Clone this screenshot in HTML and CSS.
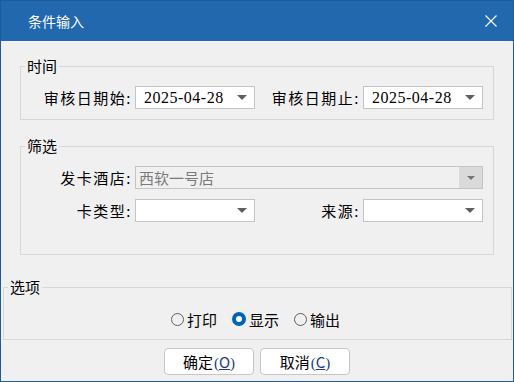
FILE: index.html
```html
<!DOCTYPE html>
<html lang="zh-CN">
<head>
    <meta charset="UTF-8">
    <title>条件输入</title>
    <link rel="stylesheet" href="styles.css">
</head>
<body>

<div class="window">
    <div class="titlebar">
        <span class="title">条件输入</span>
        <svg class="close" width="12" height="12" viewBox="0 0 12 12">
            <path d="M0.5 0.5 L11.5 11.5 M11.5 0.5 L0.5 11.5" stroke="#fff" stroke-width="1.2" fill="none"/>
        </svg>
    </div>

    <fieldset class="group group-time">
        <legend>时间</legend>
        <div class="grid">
            <label class="lbl">审核日期始:</label>
            <div class="select"><span class="val date">2025-04-28</span><span class="arrow"></span></div>
            <label class="lbl">审核日期止:</label>
            <div class="select"><span class="val date">2025-04-28</span><span class="arrow"></span></div>
        </div>
    </fieldset>

    <fieldset class="group group-filter">
        <legend>筛选</legend>
        <div class="grid">
            <label class="lbl">发卡酒店:</label>
            <div class="select disabled wide"><span class="val">西软一号店</span><span class="btn"><span class="arrow"></span></span></div>
            <label class="lbl">卡类型:</label>
            <div class="select"><span class="val"></span><span class="arrow"></span></div>
            <label class="lbl">来源:</label>
            <div class="select"><span class="val"></span><span class="arrow"></span></div>
        </div>
    </fieldset>

    <fieldset class="group group-options">
        <legend>选项</legend>
        <div class="radios">
            <span class="radio-item"><span class="radio"></span>打印</span>
            <span class="radio-item"><span class="radio checked"></span>显示</span>
            <span class="radio-item"><span class="radio"></span>输出</span>
        </div>
    </fieldset>

    <div class="buttons">
        <button type="button">确定<span class="key">(<u>O</u>)</span></button>
        <button type="button">取消<span class="key">(<u>C</u>)</span></button>
    </div>
</div>

</body>
</html>
```

FILE: styles.css
```css
* {
    box-sizing: border-box;
    font-family: "Noto Sans CJK SC", "Liberation Sans", sans-serif;
}

body {
    margin: 0;
    background-color: #f0f0f0;
}

.window {
    width: 514px;
    height: 382px;
    border: 1px solid #1b5c9d;
    background-color: #f0f0f0;
    color: #000;
    font-size: 15px;
}

.titlebar {
    height: 40px;
    background-color: #2168ae;
    color: #fff;
    display: flex;
    align-items: center;
    justify-content: space-between;
    padding: 0 16px 0 27px;
}

.title {
    font-size: 14px;
}

.group {
    border: 1px solid #d7d7d7;
    padding: 11px 0 10px 0;
}

legend {
    font-size: 15px;
    line-height: 18px;
    padding: 0 2px;
    margin-left: 4px;
}

.group-time {
    margin: 16px 19px 0 19px;
}

.group-filter {
    margin: 17px 19px 0 19px;
    padding-bottom: 32px;
}

.group-options {
    margin: 23px 1px 0 2px;
    padding: 13px 0 10px 0;
}

.grid {
    display: grid;
    grid-template-columns: 114px 120px 108px 120px;
    row-gap: 10px;
    align-items: center;
}

.lbl {
    text-align: right;
    padding-right: 3px;
    line-height: 23px;
    letter-spacing: 1.5px;
    white-space: nowrap;
}

.select {
    height: 23px;
    background-color: #fff;
    border: 1px solid #c4c4c4;
    display: flex;
    align-items: center;
    justify-content: space-between;
}

.select .val {
    padding-left: 8px;
    line-height: 21px;
}

.date {
    font-family: "Liberation Serif", serif;
    font-size: 16px;
    letter-spacing: 0.5px;
}

.arrow {
    width: 0;
    height: 0;
    border-left: 5px solid transparent;
    border-right: 5px solid transparent;
    border-top: 5px solid #5b615b;
    margin-right: 7px;
}

.select.wide {
    grid-column: 2 / 5;
}

.select.disabled {
    background-color: #f0f0f0;
    color: #7a7a7a;
}

.select.disabled .val {
    padding-left: 3px;
}

.select.disabled .btn {
    width: 23px;
    height: 21px;
    background-color: #dadada;
    display: flex;
    align-items: center;
    justify-content: center;
}

.select.disabled .btn .arrow {
    margin-right: 0;
    border-left-width: 4px;
    border-right-width: 4px;
    border-top: 4px solid #6f7a6f;
}

.radios {
    height: 20px;
    display: flex;
    align-items: center;
    justify-content: center;
    gap: 15px;
    padding-right: 4px;
}

.radio-item {
    display: flex;
    align-items: center;
    gap: 3px;
}

.radio {
    width: 13px;
    height: 13px;
    border: 1px solid #5f5f5f;
    border-radius: 50%;
}

.radio.checked {
    width: 14px;
    height: 14px;
    border: 4px solid #0063b8;
    background-color: #fff;
}

.buttons {
    display: flex;
    justify-content: center;
    gap: 6px;
    margin-top: 8px;
}

button {
    width: 90px;
    height: 27px;
    background-color: #fff;
    border: 1px solid #c6c6c6;
    border-radius: 4px;
    font-size: 15px;
    padding: 0;
    color: #000;
}

.key {
    font-family: "Liberation Serif", serif;
    color: #1c3c7a;
    margin-left: 1px;
}
```
